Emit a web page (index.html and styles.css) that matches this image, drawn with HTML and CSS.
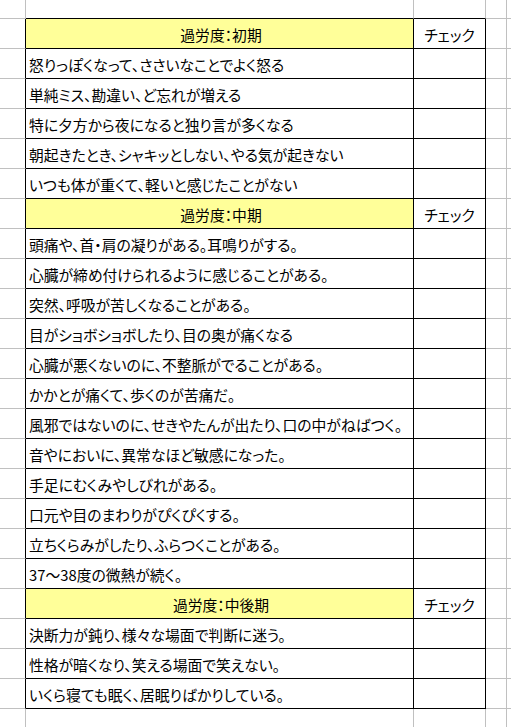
FILE: index.html
```html
<!DOCTYPE html>
<html lang="ja">
<head>
<meta charset="utf-8">
<title>過労度チェック</title>
<link rel="stylesheet" href="styles.css">
</head>
<body>
<div class="sheet">
  <div class="row top"><div class="c c0"></div><div class="c c1"></div><div class="c c2"></div><div class="c c3"></div><div class="c c4"></div></div>

  <div class="row t"><div class="c c0"></div><div class="c c1 head">過労度：初期</div><div class="c c2 chk">チェック</div><div class="c c3"></div><div class="c c4"></div></div>
  <div class="row t"><div class="c c0"></div><div class="c c1">怒りっぽくなって、ささいなことでよく怒る</div><div class="c c2"></div><div class="c c3"></div><div class="c c4"></div></div>
  <div class="row t"><div class="c c0"></div><div class="c c1">単純ミス、勘違い、ど忘れが増える</div><div class="c c2"></div><div class="c c3"></div><div class="c c4"></div></div>
  <div class="row t"><div class="c c0"></div><div class="c c1">特に夕方から夜になると独り言が多くなる</div><div class="c c2"></div><div class="c c3"></div><div class="c c4"></div></div>
  <div class="row t"><div class="c c0"></div><div class="c c1">朝起きたとき、シャキッとしない、やる気が起きない</div><div class="c c2"></div><div class="c c3"></div><div class="c c4"></div></div>
  <div class="row t"><div class="c c0"></div><div class="c c1">いつも体が重くて、軽いと感じたことがない</div><div class="c c2"></div><div class="c c3"></div><div class="c c4"></div></div>

  <div class="row t"><div class="c c0"></div><div class="c c1 head">過労度：中期</div><div class="c c2 chk">チェック</div><div class="c c3"></div><div class="c c4"></div></div>
  <div class="row t"><div class="c c0"></div><div class="c c1">頭痛や、首・肩の凝りがある。耳鳴りがする。</div><div class="c c2"></div><div class="c c3"></div><div class="c c4"></div></div>
  <div class="row t"><div class="c c0"></div><div class="c c1">心臓が締め付けられるように感じることがある。</div><div class="c c2"></div><div class="c c3"></div><div class="c c4"></div></div>
  <div class="row t"><div class="c c0"></div><div class="c c1">突然、呼吸が苦しくなることがある。</div><div class="c c2"></div><div class="c c3"></div><div class="c c4"></div></div>
  <div class="row t"><div class="c c0"></div><div class="c c1">目がショボショボしたり、目の奥が痛くなる</div><div class="c c2"></div><div class="c c3"></div><div class="c c4"></div></div>
  <div class="row t"><div class="c c0"></div><div class="c c1">心臓が悪くないのに、不整脈がでることがある。</div><div class="c c2"></div><div class="c c3"></div><div class="c c4"></div></div>
  <div class="row t"><div class="c c0"></div><div class="c c1">かかとが痛くて、歩くのが苦痛だ。</div><div class="c c2"></div><div class="c c3"></div><div class="c c4"></div></div>
  <div class="row t"><div class="c c0"></div><div class="c c1">風邪ではないのに、せきやたんが出たり、口の中がねばつく。</div><div class="c c2"></div><div class="c c3"></div><div class="c c4"></div></div>
  <div class="row t"><div class="c c0"></div><div class="c c1">音やにおいに、異常なほど敏感になった。</div><div class="c c2"></div><div class="c c3"></div><div class="c c4"></div></div>
  <div class="row t"><div class="c c0"></div><div class="c c1">手足にむくみやしびれがある。</div><div class="c c2"></div><div class="c c3"></div><div class="c c4"></div></div>
  <div class="row t"><div class="c c0"></div><div class="c c1">口元や目のまわりがぴくぴくする。</div><div class="c c2"></div><div class="c c3"></div><div class="c c4"></div></div>
  <div class="row t"><div class="c c0"></div><div class="c c1">立ちくらみがしたり、ふらつくことがある。</div><div class="c c2"></div><div class="c c3"></div><div class="c c4"></div></div>
  <div class="row t"><div class="c c0"></div><div class="c c1">37～38度の微熱が続く。</div><div class="c c2"></div><div class="c c3"></div><div class="c c4"></div></div>

  <div class="row t"><div class="c c0"></div><div class="c c1 head">過労度：中後期</div><div class="c c2 chk">チェック</div><div class="c c3"></div><div class="c c4"></div></div>
  <div class="row t"><div class="c c0"></div><div class="c c1">決断力が鈍り、様々な場面で判断に迷う。</div><div class="c c2"></div><div class="c c3"></div><div class="c c4"></div></div>
  <div class="row t"><div class="c c0"></div><div class="c c1">性格が暗くなり、笑える場面で笑えない。</div><div class="c c2"></div><div class="c c3"></div><div class="c c4"></div></div>
  <div class="row t"><div class="c c0"></div><div class="c c1">いくら寝ても眠く、居眠りばかりしている。</div><div class="c c2"></div><div class="c c3"></div><div class="c c4"></div></div>

  <div class="row bottom"><div class="c c0"></div><div class="c c1"></div><div class="c c2"></div><div class="c c3"></div><div class="c c4"></div></div>
</div>
</body>
</html>
```

FILE: styles.css
```css
html, body {
  margin: 0;
  padding: 0;
  background: #ffffff;
}

.sheet {
  width: 511px;
  height: 727px;
  overflow: hidden;
  font-family: "Noto Sans CJK JP", "Noto Sans", sans-serif;
  font-size: 14.8px;
  font-feature-settings: "palt";
  color: #000;
}

.row {
  display: grid;
  grid-template-columns: 26px 388px 72px 21px 5px;
  height: 30px;
}

.row.top { height: 19px; }
.row.bottom { height: 19px; }

.c {
  box-sizing: border-box;
  border-right: 1px solid #c0c0c0;
  border-bottom: 1px solid #c0c0c0;
  white-space: nowrap;
  overflow: hidden;
  display: flex;
  align-items: center;
  line-height: 1;
  padding-top: 3px;
}

.c4 { border-right: none; }

.top .c1, .top .c2 { border-bottom-color: #000; }

.t .c0 { border-right-color: #000; }
.t .c1, .t .c2 {
  border-right-color: #000;
  border-bottom-color: #000;
}

.t .c1 { padding-left: 3px; }

.head {
  background: #ffff99;
  justify-content: center;
}

.chk {
  justify-content: center;
}
```
